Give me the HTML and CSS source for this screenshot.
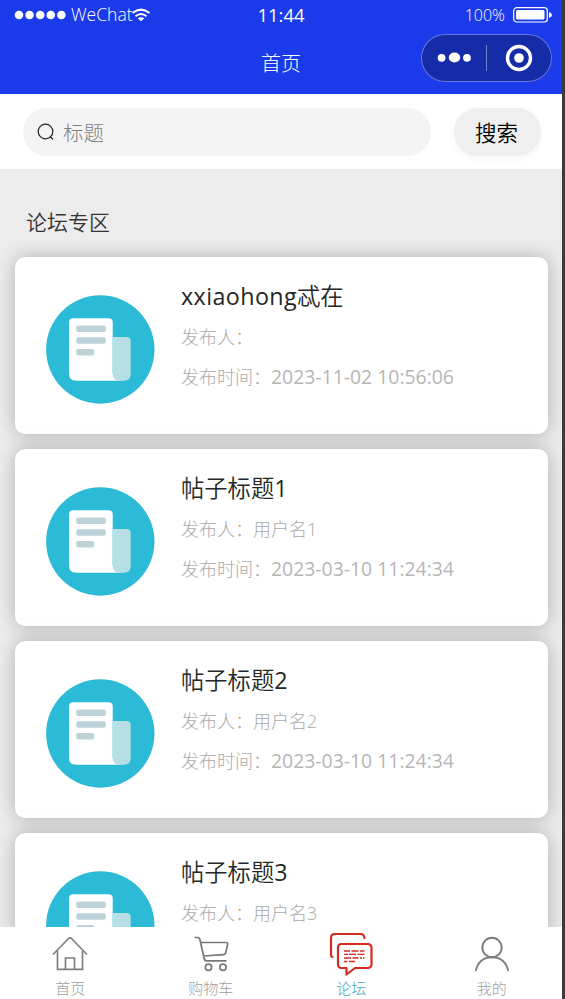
FILE: index.html
```html
<!DOCTYPE html>
<html lang="zh-CN">
<head>
<meta charset="utf-8">
<title>首页</title>
<link rel="stylesheet" href="styles.css">
</head>
<body>
<svg class="defs" width="0" height="0">
  <symbol id="post" viewBox="0 0 109 109">
    <circle cx="54.300" cy="54.500" r="54.200" fill="#2cbbd6"/>
    <path d="M27.500 23.300h35q4.200 0 4.200 4.200V78L75 85.800H30q-7 0-7-7V27.500q0-4.200 4.500-4.200z" fill="#fff"/>
    <path d="M66.700 42h14q4 0 4 4v33q0 6.800-7 6.800h-3.500q-7.500 0-7.500-7z" fill="#b7dfe6"/>
    <g fill="#bdd3da"><rect x="30.300" y="30.500" width="29.500" height="6.500" rx="2"/><rect x="30.300" y="42.300" width="29.500" height="6.500" rx="2"/><rect x="30.300" y="54" width="18" height="6.500" rx="2"/></g>
  </symbol>
</svg>
<div class="phone">
  <header class="header">
    <div class="status">
      <div class="carrier">
        <svg width="53" height="10" viewBox="0 0 53 10" fill="#fff"><circle cx="5" cy="5" r="4.300"/><circle cx="15.600" cy="5" r="4.300"/><circle cx="26.200" cy="5" r="4.300"/><circle cx="36.800" cy="5" r="4.300"/><circle cx="47.400" cy="5" r="4.300"/></svg>
        <span class="carrier-name">WeChat</span>
        <svg class="wifi" width="20" height="14" viewBox="0 0 20 14" fill="none" stroke="#fff" stroke-width="2"><path d="M1.500 5Q10-1.800 18.500 5M4.500 8.300Q10 3.800 15.500 8.300"/><path d="M6.700 10.300Q10 8 13.300 10.300L10 13.300z" fill="#fff" stroke="none"/></svg>
      </div>
      <div class="clock">11:44</div>
      <div class="battery">
        <span>100%</span>
        <svg width="39" height="16" viewBox="0 0 39 16"><rect x=".7" y=".7" width="33.600" height="14.300" rx="3" fill="none" stroke="#fff" stroke-width="1.200"/><rect x="3" y="3" width="28.500" height="9.500" rx="1.500" fill="#fff"/><path d="M36 5q3 1 3 3t-3 3z" fill="#fff"/></svg>
      </div>
    </div>
    <div class="nav">
      <h1 class="nav-title">首页</h1>
      <div class="capsule">
        <svg width="131" height="48" viewBox="0 0 131 48" fill="#fff"><circle cx="20.600" cy="23.800" r="3.900"/><ellipse cx="33.500" cy="23.500" rx="5.700" ry="5"/><circle cx="46" cy="23.800" r="3.900"/><path d="M65 11h1v26h-1z" opacity=".4"/><circle cx="98" cy="24" r="11.500" fill="none" stroke="#fff" stroke-width="3.400"/><circle cx="98" cy="24" r="4.800"/></svg>
      </div>
    </div>
  </header>
  <section class="search">
    <div class="search-box">
      <svg width="18" height="18" viewBox="0 0 18 18" fill="none" stroke="#222" stroke-width="1.200"><circle cx="8.500" cy="8.500" r="7.300"/><path d="M13 13.500l3 3"/></svg>
      <span>标题</span>
    </div>
    <button class="search-btn">搜索</button>
  </section>
  <main class="forum">
    <h2 class="forum-title">论坛专区</h2>
    <article class="card">
      <svg class="thumb"><use href="#post"/></svg>
      <div class="info"><h3><span class="latin">xxiaohong</span>忒在</h3><p>发布人：</p><p>发布时间：<time>2023-11-02 10:56:06</time></p></div>
    </article>
    <article class="card">
      <svg class="thumb"><use href="#post"/></svg>
      <div class="info"><h3>帖子标题<span class="latin">1</span></h3><p>发布人：用户名1</p><p>发布时间：<time>2023-03-10 11:24:34</time></p></div>
    </article>
    <article class="card">
      <svg class="thumb"><use href="#post"/></svg>
      <div class="info"><h3>帖子标题<span class="latin">2</span></h3><p>发布人：用户名2</p><p>发布时间：<time>2023-03-10 11:24:34</time></p></div>
    </article>
    <article class="card">
      <svg class="thumb"><use href="#post"/></svg>
      <div class="info"><h3>帖子标题<span class="latin">3</span></h3><p>发布人：用户名3</p></div>
    </article>
  </main>
  <footer class="tabs">
    <div class="tab">
      <svg width="44" height="44" viewBox="0 0 44 44" fill="none" stroke="#808080" stroke-width="1.700"><path d="M5 22.500L20.500 6.500q1.500-1.300 3 0L39 22.500M9.500 19v18.300h25V19M17.500 37V26h9v11"/></svg>
      <span>首页</span>
    </div>
    <div class="tab">
      <svg width="44" height="44" viewBox="0 0 44 44" fill="none" stroke="#777" stroke-width="1.700"><path d="M5.500 5.500h3q2 0 2.500 2.500l4 18q.5 2.800 2.500 2.800h20M12 10.500h25q2 0 1.600 2l-1.800 8q-.4 2-2.300 2.100L14.500 24"/><circle cx="19.500" cy="35.300" r="3.100"/><circle cx="34" cy="35.300" r="3.100"/></svg>
      <span>购物车</span>
    </div>
    <div class="tab active">
      <svg width="44" height="44" viewBox="0 0 44 44" fill="none" stroke="#d32b1f" stroke-width="2.200" stroke-linecap="round" stroke-linejoin="round"><path d="M3.500 25Q2 25 2 22.500V6q0-4 4-4h26q3 0 3.500 4.200"/><path d="M12.500 12h26q4 0 4 4v16q0 4-4 4H26l-8.500 6.500V36h-5q-3.500 0-3.500-4V16q0-4 3.500-4z"/><path d="M15 19h6M22.500 19h7M31 19h4.500M15 22.300h4M20 22.300h7M28.500 22.300h7M15 26h7M23.500 26h6M31 26h2M34 26h1.500M15 29.500h3.500M20 29.500h6" stroke-width="1.300" stroke-linecap="butt"/></svg>
      <span>论坛</span>
    </div>
    <div class="tab">
      <svg width="44" height="44" viewBox="0 0 44 44" fill="none" stroke="#7c7c7c" stroke-width="1.900"><circle cx="22" cy="15.500" r="9.700"/><path d="M5.700 39C8 29 14 25.200 22 25.200S36 29 38.300 39"/></svg>
      <span>我的</span>
    </div>
  </footer>
</div>
</body>
</html>
```
FILE: styles.css
```css
* { box-sizing: border-box; }
body {
  margin: 0;
  height: 999px;
  overflow: hidden;
  background: #3b3b3b;
  font-family: "Open Sans", "Noto Sans CJK SC", sans-serif;
}
h1, h2, h3, p { margin: 0; font-weight: 400; }
svg { display: block; flex: none; }
.defs { position: absolute; }
.phone {
  width: 562px;
  height: 999px;
  display: flex;
  flex-direction: column;
  overflow: hidden;
  background: #ececec;
}
.header { height: 94px; flex: none; background: #1b3aea; color: #fff; }
.status {
  height: 30px;
  padding: 0 10px 0 14px;
  display: grid;
  grid-template-columns: 1fr auto 1fr;
  align-items: center;
}
.carrier { display: flex; align-items: center; font-size: 17.500px; font-weight: 300; }
.carrier-name { margin-left: 4px; line-height: 28px; padding-bottom: 2px; }
.wifi { margin-left: -2px; }
.clock { font-size: 18.500px; line-height: 30px; padding-right: 4px; }
.battery { display: flex; align-items: center; justify-content: flex-end; gap: 8px; font-size: 16px; font-weight: 300; }
.nav {
  height: 64px;
  padding: 4px 10px 0 141px;
  display: grid;
  grid-template-columns: 1fr 131px;
}
.nav-title { text-align: center; font-size: 20px; font-weight: 300; line-height: 60px; }
.capsule { width: 131px; height: 48px; border-radius: 24px; background: #152ba8; box-shadow: inset 0 0 0 1px #6478df; }
.search {
  height: 75px;
  flex: none;
  padding: 14px 21px 13px 23px;
  display: flex;
  justify-content: space-between;
  background: #fff;
}
.search-box {
  width: 408px;
  height: 48px;
  padding-left: 14px;
  display: flex;
  align-items: center;
  gap: 8px;
  border-radius: 24px;
  background: #f4f4f4;
  color: #808080;
  font-size: 20.500px;
  font-weight: 300;
}
.search-btn {
  width: 87px;
  height: 48px;
  padding: 0 2px 1px 0;
  border: 0;
  border-radius: 24px;
  background: #efefef;
  box-shadow: 0 3px 7px rgba(0, 0, 0, .04);
  color: #000;
  font: 350 21.500px/47px "Noto Sans CJK SC", sans-serif;
}
.forum { flex: 1; min-height: 0; overflow: hidden; padding: 39px 14px 0 15px; }
.forum-title { height: 49px; padding-left: 11px; font-size: 21px; font-weight: 350; line-height: 29px; color: #333; }
.card {
  height: 177px;
  margin-bottom: 15px;
  padding: 22px 31px;
  display: flex;
  gap: 26px;
  border-radius: 10px;
  background: #fff;
  box-shadow: 0 0 19px rgba(0, 0, 0, .26);
}
.thumb { width: 109px; height: 109px; margin-top: 16px; }
.info { white-space: nowrap; }
.info h3 { height: 39px; font-size: 23.300px; font-weight: 350; line-height: 34px; color: #262626; }
.latin { font-weight: 400; letter-spacing: .4px; }
.info p { height: 39px; font-size: 18px; font-weight: 300; line-height: 39px; color: #aaa; }
.info time { font-size: 19.400px; font-weight: 400; color: #b6b6b6; }
.tabs {
  height: 72px;
  flex: none;
  display: grid;
  grid-template-columns: repeat(4, 1fr);
  position: relative;
  background: #fff;
}
.tab {
  padding-top: 5px;
  display: flex;
  flex-direction: column;
  align-items: center;
  color: #a0a0a0;
  font-size: 15px;
  font-weight: 300;
  line-height: 24px;
}
.tab.active { color: #41a8b4; }
```
